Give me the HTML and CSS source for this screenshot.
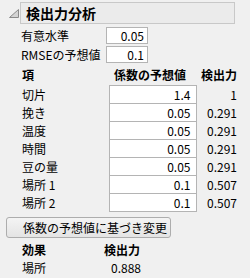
FILE: index.html
```html
<!DOCTYPE html>
<html lang="ja">
<head>
    <meta charset="UTF-8" />
    <title>検出力分析</title>
    <link rel="stylesheet" href="styles.css">
</head>
<body>
    <div class="outline">
        <div class="outline-head">
            <svg class="toggle" width="10" height="9" viewBox="0 0 10 9">
                <path d="M9.5 0.5 L9.5 8.5 L0.5 8.5 Z" fill="#d4d4d4" stroke="#8a8a8a" stroke-width="1"/>
            </svg>
            <div class="title-box">検出力分析</div>
        </div>
        <div class="outline-body">
            <div class="settings">
                <label>有意水準</label>
                <div class="field">0.05</div>
                <label>RMSEの予想値</label>
                <div class="field">0.1</div>
            </div>

            <table class="power-table">
                <thead>
                    <tr>
                        <th class="col-term">項</th>
                        <th class="col-coef">係数の予想値</th>
                        <th class="col-power">検出力</th>
                    </tr>
                </thead>
                <tbody>
                    <tr><td>切片</td><td class="cell">1.4</td><td class="num">1</td></tr>
                    <tr><td>挽き</td><td class="cell">0.05</td><td class="num">0.291</td></tr>
                    <tr><td>温度</td><td class="cell">0.05</td><td class="num">0.291</td></tr>
                    <tr><td>時間</td><td class="cell">0.05</td><td class="num">0.291</td></tr>
                    <tr><td>豆の量</td><td class="cell">0.05</td><td class="num">0.291</td></tr>
                    <tr><td>場所 1</td><td class="cell">0.1</td><td class="num">0.507</td></tr>
                    <tr><td>場所 2</td><td class="cell">0.1</td><td class="num">0.507</td></tr>
                </tbody>
            </table>
        </div>

        <button class="change-btn">係数の予想値に基づき変更</button>

        <table class="effect-table">
            <thead>
                <tr><th class="col-effect">効果</th><th class="col-epower">検出力</th></tr>
            </thead>
            <tbody>
                <tr><td>場所</td><td class="num">0.888</td></tr>
            </tbody>
        </table>
    </div>
</body>
</html>
```

FILE: styles.css
```css
body {
    margin: 0;
    background: #f0f0f0;
    color: #000;
    font-family: "Noto Sans CJK JP", "Noto Sans", sans-serif;
    font-size: 12px;
}

.outline {
    padding-top: 2px;
}

.outline-head {
    display: flex;
    align-items: center;
    height: 22px;
}

.toggle {
    margin-left: 9px;
    margin-right: 1px;
}

.title-box {
    width: 208px;
    height: 20px;
    line-height: 20px;
    padding-left: 5px;
    border: 1px solid #c8c8c8;
    background: #ebebeb;
    font-size: 14px;
    font-weight: bold;
}

.outline-body {
    margin-left: 21px;
}

.settings {
    display: grid;
    grid-template-columns: 85px 42px;
    row-gap: 2px;
    margin-top: 3px;
    align-items: center;
}

.settings label {
    line-height: 16px;
}

.field {
    height: 15px;
    line-height: 15px;
    border: 1px solid #b4b4b4;
    background: #fff;
    text-align: right;
    padding-right: 3px;
}

.power-table {
    border-collapse: collapse;
    margin-top: 3px;
}

.power-table th {
    font-weight: bold;
    height: 17px;
    line-height: 16px;
    padding: 0 0 2px 0;
    text-align: left;
    vertical-align: middle;
}

.power-table th.col-term {
    width: 87px;
    padding-left: 1px;
}

.power-table th.col-coef {
    width: 82px;
    padding-left: 5px;
}

.power-table th.col-power {
    width: 41px;
    text-align: right;
}

.power-table td {
    height: 17px;
    padding: 0;
    line-height: 16px;
}

.power-table td:first-child {
    padding-left: 1px;
}

.power-table td.cell {
    border: 1px solid #b4b4b4;
    background: #fff;
    text-align: right;
    padding-right: 5px;
}

.num {
    text-align: right;
}

.change-btn {
    display: block;
    margin: 5px 0 0 6px;
    width: 165px;
    height: 21px;
    padding: 0 0 0 16px;
    text-align: left;
    font-family: inherit;
    font-size: 12px;
    line-height: 16px;
    color: #000;
    border: 1px solid #adadad;
    border-radius: 3px;
    background: linear-gradient(#f4f4f4, #e4e4e4);
}

.effect-table {
    border-collapse: collapse;
    margin: 2px 0 0 21px;
}

.effect-table th {
    font-weight: bold;
    text-align: left;
    height: 19px;
    line-height: 16px;
    padding: 0;
}

.effect-table th.col-effect {
    width: 82px;
    padding-left: 1px;
}

.effect-table th.col-epower {
    width: 37px;
}

.effect-table td {
    height: 18px;
    line-height: 16px;
    padding: 0;
}

.effect-table td:first-child {
    padding-left: 1px;
}
```
